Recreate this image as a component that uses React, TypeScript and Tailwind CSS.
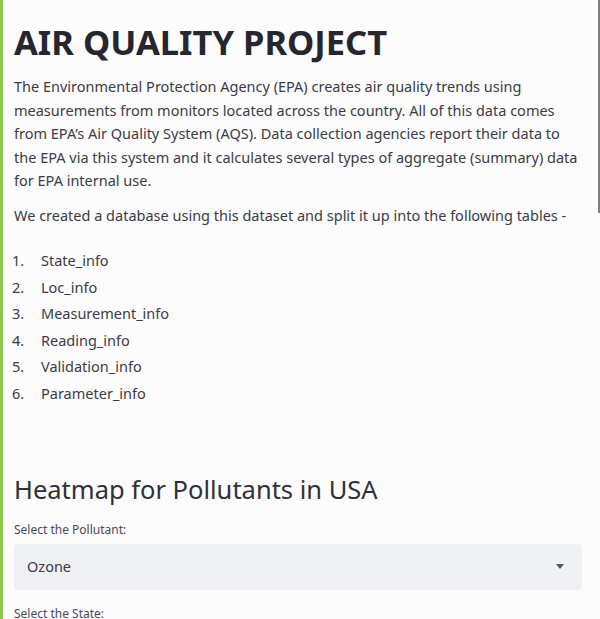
import React from "react";

const tables = [
  "State_info",
  "Loc_info",
  "Measurement_info",
  "Reading_info",
  "Validation_info",
  "Parameter_info",
];

const intro = [
  "The Environmental Protection Agency (EPA) creates air quality trends using",
  "measurements from monitors located across the country. All of this data comes",
  "from EPA’s Air Quality System (AQS). Data collection agencies report their data to",
  "the EPA via this system and it calculates several types of aggregate (summary) data",
  "for EPA internal use.",
];

export default function App() {
  return (
    <div className="h-[619px] w-[600px] overflow-hidden bg-[#fcfcfd] flex font-['Noto_Sans',sans-serif] text-[#3a3b44]">
      {/* left accent bar */}
      <div className="w-[3px] shrink-0 bg-[#8cc84b]" />

      <main className="flex-1 pl-[11px] pr-[14px] pt-[22px]">
        <h1 className="text-[34.5px] font-bold leading-[40px] text-[#26272e]">
          AIR QUALITY PROJECT
        </h1>

        <p className="mt-[13px] text-[14.5px] leading-[23.5px] whitespace-nowrap">
          {intro.map((line) => (
            <span key={line} className="block">
              {line}
            </span>
          ))}
        </p>

        <p className="mt-[11px] text-[14.5px] leading-[23.5px]">
          We created a database using this dataset and split it up into the following tables -
        </p>

        <ol className="mt-[20px] flex flex-col">
          {tables.map((t, i) => (
            <li key={t} className="flex text-[14.5px] leading-[26.6px]">
              <span className="w-[29px] -ml-[2px]">{i + 1}.</span>
              <span>{t}</span>
            </li>
          ))}
        </ol>

        <h2 className="mt-[66px] text-[25.5px] leading-[32px] text-[#2f3038]">
          Heatmap for Pollutants in USA
        </h2>

        <label className="mt-[18px] block text-[12px] leading-[14px] text-[#4a4b53]">
          Select the Pollutant:
        </label>
        <div className="mt-[7px] h-[46px] w-[568px] rounded-[4px] bg-[#eef0f4] flex items-center justify-between pl-[13px] pr-[18px]">
          <span className="text-[14.5px]">Ozone</span>
          <svg width="8" height="5" viewBox="0 0 8 5">
            <path d="M0 0 L8 0 L4 5 Z" fill="#55565e" />
          </svg>
        </div>

        <label className="mt-[17px] block text-[12px] leading-[14px] text-[#4a4b53]">
          Select the State:
        </label>
      </main>

      {/* scrollbar thumb */}
      <div className="w-[6px] shrink-0 flex justify-center">
        <div className="w-[2px] h-[213px] bg-[#7d7e84]" />
      </div>
    </div>
  );
}
